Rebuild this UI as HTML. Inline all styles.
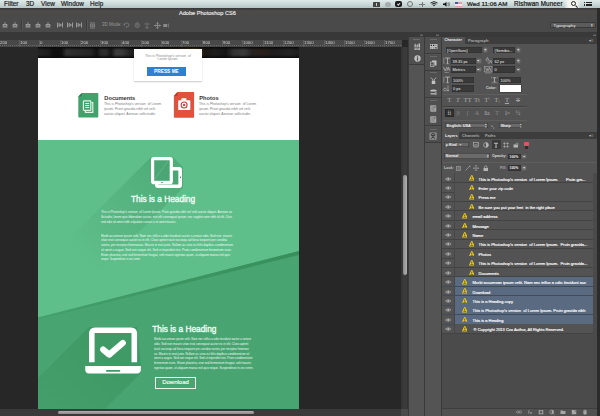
<!DOCTYPE html>
<html><head><meta charset="utf-8">
<style>
*{margin:0;padding:0;box-sizing:border-box}
html,body{width:600px;height:416px;overflow:hidden;background:#272727;font-family:"Liberation Sans",sans-serif}
.a{position:absolute}
#menubar{left:0;top:0;width:600px;height:8px;background:linear-gradient(#dfe9e9,#c8d6d6 60%,#b3c4c4);}
#menubar span{position:absolute;top:.3px;font-size:6.4px;line-height:8px;color:#1e1e1e;-webkit-text-stroke:.2px #1e1e1e;letter-spacing:.05px}
#titlebar{left:0;top:8px;width:600px;height:10px;background:linear-gradient(#383838,#3e3d3d 12%,#4d4a4a 25%,#4b4949)}
#optbar{left:0;top:18px;width:600px;height:13.5px;background:#4a4a4a}
#darkband{left:0;top:31.5px;width:408px;height:8.5px;background:#383838}
#ruler{left:0;top:40px;width:402px;height:7px;background:#484848;overflow:hidden}
#canvas{left:0;top:47px;width:402px;height:362px;background:#272727;overflow:hidden}
#vscroll{left:401px;top:46.5px;width:7px;height:362.5px;background:linear-gradient(90deg,#333,#3b3b3b 40%,#3a3a3a 85%,#2e2e2e)}
#hscroll{left:0;top:409px;width:401px;height:7px;background:#3a3a3a}
#hcorner{left:401px;top:409px;width:7px;height:7px;background:#4a4a4a}
#rpanel{left:408px;top:31.5px;width:192px;height:385px;background:#393939}
.ic{position:absolute;background:#bdbdbd}
.tl{position:absolute;color:#f2faf5;font-size:6.8px;line-height:9.5px;white-space:nowrap;transform-origin:0 0}
.hd{font-size:8.3px;color:#f4fbf6;line-height:10px;white-space:nowrap;-webkit-text-stroke:.35px #f4fbf6}
.tiny{position:absolute;color:#fff;font-size:3.4px;line-height:4.75px;word-spacing:-0.2px}
</style></head><body>
<div id="menubar" class="a">
<span style="left:4px">Filter</span>
<span style="left:26px">3D</span>
<span style="left:41px">View</span>
<span style="left:61px">Window</span>
<span style="left:90px">Help</span>
</div>
<div id="titlebar" class="a"><span class="a" style="left:179px;top:1.3px;font-size:5.6px;line-height:9px;color:#e8e8e8;-webkit-text-stroke:.15px #e8e8e8">Adobe Photoshop CS6</span></div>
<div id="optbar" class="a"></div>
<div id="darkband" class="a"></div>
<div id="ruler" class="a"></div>
<div id="canvas" class="a">
 <!-- document, coordinates relative to canvas (top=47) -->
 <div class="a" id="doc" style="left:38px;top:0;width:261px;height:362px;background:#fff;overflow:hidden">
  <div class="a" style="left:0;top:0;width:261px;height:11px;background:linear-gradient(90deg,#242424 0%,#1c1c1c 4%,#0e0e0e 6%,#101010 9%,#333 11%,#2c2c2c 14%,#262626 20%,#121212 22.5%,#2a2a2a 24%,#2e2e2e 26%,#161616 28%,#3c3c3c 30%,#3a3a3a 32%,#242424 35%,#1a1a1a 38%,#3a2c18 55%,#5a4222 60%,#1a1714 64%,#1e1e1e 68%,#151515 72%,#343434 75%,#3a3a3a 79%,#262222 82%,#2a1e1a 86%,#1e1c1c 90%,#242424 96%,#1c1c1c 100%)"></div>
  <div class="a" style="left:0;top:0;width:261px;height:11px;background:linear-gradient(#0a0a0a,rgba(0,0,0,0) 30%,rgba(0,0,0,0) 70%,#0a0a0a)"></div>
  <!-- popup card -->
  <div class="a" style="left:95.7px;top:2.2px;width:68.5px;height:31.5px;background:#fff;box-shadow:0 .6px 1.2px rgba(0,0,0,.22)">
   <div class="a" style="left:0;top:6px;width:68.5px;text-align:center;font-size:3.4px;line-height:3px;color:#8c8c8c">This is Photoshop's version &nbsp;of<br>Lorem Ipsum.</div>
   <div class="a" style="left:13px;top:18px;width:39.5px;height:8.8px;background:#2f80d1;color:#fff;font-weight:bold;font-size:4.8px;line-height:9px;text-align:center">PRESS ME</div>
  </div>
  <!-- features -->
  <svg class="a" style="left:40px;top:45px" width="22" height="27" viewBox="0 0 22 27">
   <path d="M3.8 0.9H19.6a0.7 0.7 0 0 1 .7.7V24.7a0.7 0.7 0 0 1-.7.7H1a0.7 0.7 0 0 1-.7-.7V4.4Z" fill="#41a26b"/>
   <path d="M3.8 0.9V4.4H0.3Z" fill="#2f7f52"/>
   <g fill="none" stroke="#e4f4ea" stroke-width="1.15">
    <rect x="5.4" y="8.9" width="7.4" height="9.4" rx=".8"/>
    <path d="M13.4 10.6H14.8V20.4H7.4V18.9"/>
    <path d="M7.2 11.5h4M7.2 13.5h4M7.2 15.5h4"/>
   </g>
  </svg>
  <div class="a" style="left:66.3px;top:47.5px;font-size:5.7px;font-weight:bold;color:#333;line-height:7px">Documents</div>
  <div class="a" style="left:66px;top:55.3px;width:58px;font-size:3.45px;line-height:4.7px;color:#7c7c7c">This is Photoshop's version &nbsp;of Lorem ipsum. Proin gravida nibh vel velit auctor aliquet. Aenean sollicitudin.</div>
  <svg class="a" style="left:135px;top:45px" width="22" height="27" viewBox="0 0 22 27">
   <path d="M4.6 0H20.4a0.7 0.7 0 0 1 .7.7V25.1a0.7 0.7 0 0 1-.7.7H1.6a0.7 0.7 0 0 1-.7-.7V3.7Z" fill="#e1513e"/>
   <path d="M4.6 0V3.7H0.9Z" fill="#b83a2a"/>
   <rect x="5.2" y="8.3" width="12.1" height="9.7" rx=".6" fill="#fff"/>
   <rect x="8.4" y="6.3" width="5" height="2.4" rx=".4" fill="#fff"/>
   <circle cx="11.1" cy="13" r="3.5" fill="#c9402f"/>
   <circle cx="11.1" cy="13" r="2.4" fill="#fff"/>
   <circle cx="11.1" cy="13" r="1.2" fill="#d64836"/>
  </svg>
  <div class="a" style="left:161.3px;top:47.5px;font-size:5.7px;font-weight:bold;color:#333;line-height:7px">Photos</div>
  <div class="a" style="left:161px;top:55.3px;width:58px;font-size:3.45px;line-height:4.7px;color:#7c7c7c">This is Photoshop's version &nbsp;of Lorem ipsum. Proin gravida nibh vel velit auctor aliquet. Aenean sollicitudin.</div>
  <!-- green sections -->
  <div class="a" style="left:0;top:93px;width:261px;height:269px;background:#5fbf8a"></div>
  <svg class="a" style="left:0;top:93px" width="261" height="269" viewBox="0 0 261 269">
   <defs>
    <linearGradient id="sh1" gradientUnits="userSpaceOnUse" x1="135" y1="30" x2="45" y2="120"><stop offset="0" stop-color="#3a9462" stop-opacity=".42"/><stop offset=".75" stop-color="#3a9462" stop-opacity=".12"/><stop offset="1" stop-color="#3a9462" stop-opacity="0"/></linearGradient>
    <linearGradient id="sh2" x1="1" y1="0" x2="0" y2="1"><stop offset="0" stop-color="#3a9462" stop-opacity=".45"/><stop offset="1" stop-color="#3a9462" stop-opacity=".15"/></linearGradient>
   </defs>
   <!-- tablet long shadow -->
   <polygon points="113,17 135,17 145,27 145,48 40,153 8,122" fill="url(#sh1)"/>
   <!-- lower dark region -->
   <polygon points="0,177.5 261,111 261,269 0,269" fill="#48a470"/>
   <linearGradient id="edg" gradientUnits="userSpaceOnUse" x1="0" y1="0" x2="261" y2="0"><stop offset="0" stop-color="#3d9864" stop-opacity=".35"/><stop offset=".5" stop-color="#3a945f" stop-opacity=".85"/><stop offset="1" stop-color="#37905c" stop-opacity="1"/></linearGradient><polygon points="0,177.5 261,111 261,115 0,179.5" fill="url(#edg)"/>
   <!-- laptop long shadow -->
   <linearGradient id="sh3" gradientUnits="userSpaceOnUse" x1="100" y1="200" x2="20" y2="280"><stop offset="0" stop-color="#3a9460" stop-opacity=".75"/><stop offset="1" stop-color="#3a9460" stop-opacity=".35"/></linearGradient><polygon points="51,187 99,187 103,226 103,233 67,269 0,269 0,238" fill="url(#sh3)"/>
  </svg>
  <!-- tablet icon -->
  <svg class="a" style="left:111px;top:108px" width="36" height="36" viewBox="0 0 36 36">
   <rect x="7.7" y="13.7" width="23.6" height="17.6" rx="1.2" fill="#4aa674" stroke="#fff" stroke-width="3.4"/>
   <rect x="29.6" y="14" width="2.2" height="17" fill="#fff"/>
   <rect x="31" y="21.6" width=".9" height="1.4" fill="#2f6e4c"/>
   <rect x="3.6" y="3.6" width="18.7" height="24" rx="1.2" fill="#4aa674" stroke="#fff" stroke-width="3.2"/>
   <rect x="3.8" y="25.8" width="18.3" height="2.4" fill="#fff"/>
   <rect x="12.3" y="27.1" width="1.4" height=".9" fill="#2f6e4c"/>
   <path d="M19 6 L6 24" stroke="#fff" stroke-opacity=".12" stroke-width="1.2"/>
  </svg>
  <div class="a hd" style="left:93px;top:147.3px">This is a Heading</div>
  <div class="tl" style="left:63.0px;top:162.00px;transform:scale(0.4437,.5)">This is Photoshop's version &nbsp;of Lorem Ipsum. Proin gravida nibh vel velit auctor aliquet. Aenean so</div>
  <div class="tl" style="left:63.0px;top:167.10px;transform:scale(0.4492,.5)">llicitudin, lorem quis bibendum auctor, nisi elit consequat ipsum, nec sagittis sem nibh id elit. Duis</div>
  <div class="tl" style="left:63.0px;top:172.20px;transform:scale(0.4334,.5)">sed odio sit amet nibh vulputate cursus a sit amet mauris.</div>
  <div class="tl" style="left:63.0px;top:185.60px;transform:scale(0.4423,.5)">Morbi accumsan ipsum velit. Nam nec tellus a odio tincidunt auctor a ornare odio. Sed non &nbsp;mauris</div>
  <div class="tl" style="left:63.0px;top:190.35px;transform:scale(0.4411,.5)">vitae erat consequat auctor eu in elit. Class aptent taciti sociosqu ad litora torquent per conubia</div>
  <div class="tl" style="left:63.0px;top:195.10px;transform:scale(0.4440,.5)">nostra, per inceptos himenaeos. Mauris in erat justo. Nullam ac urna eu felis dapibus condimentum</div>
  <div class="tl" style="left:63.0px;top:199.85px;transform:scale(0.4497,.5)">sit amet a augue. Sed non neque elit. Sed ut imperdiet nisi. Proin condimentum fermentum nunc.</div>
  <div class="tl" style="left:63.0px;top:204.60px;transform:scale(0.4361,.5)">Etiam pharetra, erat sed fermentum feugiat, velit mauris egestas quam, ut aliquam massa nisl quis</div>
  <div class="tl" style="left:63.0px;top:209.20px;transform:scale(0.3945,.5)">neque. Suspendisse in orci enim.</div>
  <!-- laptop icon -->
  <svg class="a" style="left:46px;top:279px" width="58" height="50" viewBox="0 0 58 50">
   <rect x="10.6" y="6.5" width="37" height="30" fill="#3f9a66"/>
   <path d="M7.8 36.2V7.2a3 3 0 0 1 3-3H47.3a3 3 0 0 1 3 3V36.2" fill="none" stroke="#fff" stroke-width="5.6"/>
   <path d="M1.25 39.9H56.9V43.4a4 4 0 0 1-4 4H5.25a4 4 0 0 1-4-4Z" fill="#fff"/>
   <rect x="21.9" y="44" width="14.4" height="1.7" rx=".85" fill="#3f9a66"/>
   <path d="M19.2 23.6 L25.2 28.6 L38.8 17" fill="none" stroke="#fff" stroke-width="6.2" stroke-linecap="round" stroke-linejoin="round"/>
  </svg>
  <div class="a hd" style="left:114.3px;top:276.6px">This is a Heading</div>
  <div class="tl" style="left:115.7px;top:289.10px;transform:scale(0.4251,.5)">Morbi accumsan ipsum velit. Nam nec tellus a odio tincidunt auctor a ornare</div>
  <div class="tl" style="left:115.7px;top:293.90px;transform:scale(0.4348,.5)">odio. Sed non mauris vitae erat consequat auctor eu in elit. Class aptent</div>
  <div class="tl" style="left:115.7px;top:298.70px;transform:scale(0.4260,.5)">taciti sociosqu ad litora torquent per conubia nostra, per inceptos himenae</div>
  <div class="tl" style="left:115.7px;top:303.50px;transform:scale(0.4364,.5)">os. Mauris in erat justo. Nullam ac urna eu felis dapibus condimentum sit</div>
  <div class="tl" style="left:115.7px;top:308.30px;transform:scale(0.4279,.5)">amet a augue. Sed non neque elit. Sed ut imperdiet nisi. Proin condimentum</div>
  <div class="tl" style="left:115.7px;top:313.00px;transform:scale(0.4397,.5)">fermentum nunc. Etiam pharetra, erat sed fermentum feugiat, velit mauris</div>
  <div class="tl" style="left:115.7px;top:317.70px;transform:scale(0.4351,.5)">egestas quam, ut aliquam massa nisl quis neque. Suspendisse in orci enim.</div>
  <div class="a" style="left:117px;top:330px;width:41px;height:11.5px;border:1px solid #e8f6ee;color:#f4fbf6;font-size:6px;line-height:9.5px;text-align:center;-webkit-text-stroke:.15px #f4fbf6">Download</div>
 </div>
</div>
<div id="vscroll" class="a"></div>
<div id="hscroll" class="a"></div><div id="hcorner" class="a"></div>
<div id="rpanel" class="a"></div>
<!--TOP-->
<div class="a" style="left:373px;top:2px;width:7px;height:4.5px;background:#444;border-radius:.5px"></div><div class="a" style="left:376px;top:2.6px;width:1px;height:3px;background:#ccc"></div>
<div class="a" style="left:385px;top:1.5px;width:5.5px;height:5.5px;background:#9a9a9a;border-radius:50%;opacity:.7"></div>
<div class="a" style="left:395px;top:1.2px;width:6.7px;height:5.8px;background:#1a1a1a;border-radius:2px"></div><div class="a" style="left:397px;top:3.3px;width:3px;height:1.5px;border-left:1px solid #ddd;border-bottom:1px solid #ddd;transform:rotate(-45deg)"></div>
<div class="a" style="left:406.5px;top:1.2px;width:6px;height:6px;border:.8px solid #777;border-radius:50%"></div>
<div class="a" style="left:419px;top:3.6px;width:6px;height:.8px;background:#777"></div><div class="a" style="left:421.6px;top:1.5px;width:.8px;height:5px;background:#777"></div>
<svg class="a" style="left:430px;top:1px" width="8" height="6" viewBox="0 0 16 12"><path d="M1 4Q8 -1.5 15 4M3.5 6.5Q8 3 12.5 6.5M6 9Q8 7.5 10 9" fill="none" stroke="#111" stroke-width="1.8"/></svg>
<svg class="a" style="left:442.5px;top:1px" width="7.5" height="6.5" viewBox="0 0 15 13"><path d="M0 5H3L7 1.5V11.5L3 8H0Z" fill="#111"/><path d="M9.5 3.5Q11.5 6.5 9.5 9.5M11.5 2Q14.5 6.5 11.5 11" fill="none" stroke="#333" stroke-width="1.1"/></svg>
<div class="a" style="left:455px;top:1.8px;width:7px;height:5px;background:repeating-linear-gradient(#d8a0a8 0 .7px,#f0e8e8 .7px 1.4px)"></div><div class="a" style="left:455px;top:1.8px;width:3px;height:2.5px;background:#4a5a9a"></div>
<div class="a" style="left:467px;top:0;font-size:6.2px;line-height:8.2px;color:#161616;-webkit-text-stroke:.2px #161616;letter-spacing:.03px">Wed 11:06 AM</div>
<div class="a" style="left:514px;top:0;font-size:6.3px;line-height:8.2px;color:#161616;letter-spacing:.1px;-webkit-text-stroke:.2px #161616">Rishwan Muneer</div>
<div class="a" style="left:564px;top:0;width:17px;height:7.5px;background:linear-gradient(90deg,rgba(255,255,255,0),#f4f4ee 25%,#f4f4ee 75%,rgba(255,255,255,0))"></div>
<div class="a" style="left:570.5px;top:1.3px;width:5.2px;height:5.2px;border:1.2px solid #222;border-radius:50%"></div><div class="a" style="left:574.8px;top:5.8px;width:2.8px;height:1.3px;background:#222;transform:rotate(45deg)"></div>
<div class="a" style="left:583.5px;top:1.8px;width:1px;height:1px;background:#222"></div><div class="a" style="left:585.5px;top:1.8px;width:6px;height:1px;background:#222"></div>
<div class="a" style="left:583.5px;top:3.6px;width:1px;height:1px;background:#222"></div><div class="a" style="left:585.5px;top:3.6px;width:6px;height:1px;background:#222"></div>
<div class="a" style="left:583.5px;top:5.4px;width:1px;height:1px;background:#222"></div><div class="a" style="left:585.5px;top:5.4px;width:6px;height:1px;background:#222"></div>
<svg class="a" style="left:2px;top:22px" width="6" height="6" viewBox="0 0 12 12"><path d="M6 0.5V4M2 5H10V8H2ZM1 10H11" fill="none" stroke="#c4c4c4" stroke-width="1.3"/></svg>
<svg class="a" style="left:12px;top:22px" width="6" height="6" viewBox="0 0 12 12"><path d="M6 0.5V4M2 5H10V8H2ZM1 10H11" fill="none" stroke="#c4c4c4" stroke-width="1.3"/></svg>
<svg class="a" style="left:25px;top:22px" width="6" height="6" viewBox="0 0 12 12"><path d="M6 0.5V4M2 5H10V8H2ZM1 10H11" fill="none" stroke="#c4c4c4" stroke-width="1.3"/></svg>
<svg class="a" style="left:35px;top:22px" width="6" height="6" viewBox="0 0 12 12"><path d="M6 0.5V4M2 5H10V8H2ZM1 10H11" fill="none" stroke="#c4c4c4" stroke-width="1.3"/></svg>
<svg class="a" style="left:45px;top:22px" width="6" height="6" viewBox="0 0 12 12"><path d="M6 0.5V4M2 5H10V8H2ZM1 10H11" fill="none" stroke="#c4c4c4" stroke-width="1.3"/></svg>
<svg class="a" style="left:57px;top:22px" width="6" height="6" viewBox="0 0 12 12"><path d="M1 1V11M4 3L9 6L4 9ZM11 1V11" fill="none" stroke="#c4c4c4" stroke-width="1.3"/></svg>
<svg class="a" style="left:67px;top:22px" width="6" height="6" viewBox="0 0 12 12"><path d="M1 1V11M4 3L9 6L4 9ZM11 1V11" fill="none" stroke="#c4c4c4" stroke-width="1.3"/></svg>
<svg class="a" style="left:76px;top:22px" width="6" height="6" viewBox="0 0 12 12"><path d="M1 1V11M4 3L9 6L4 9ZM11 1V11" fill="none" stroke="#c4c4c4" stroke-width="1.3"/></svg>
<div class="a" style="left:21px;top:20px;width:.7px;height:10px;background:#3c3c3c"></div><div class="a" style="left:21.7px;top:20px;width:.5px;height:10px;background:#575757"></div>
<div class="a" style="left:86px;top:20px;width:.7px;height:10px;background:#3c3c3c"></div><div class="a" style="left:86.7px;top:20px;width:.5px;height:10px;background:#575757"></div>
<svg class="a" style="left:89px;top:21.5px" width="7" height="7" viewBox="0 0 14 14"><path d="M2 2H12M2 12H12M3 4V10M11 4V10M6 4V10M8 4V10" fill="none" stroke="#a8a8a8" stroke-width="1.2"/></svg>
<div class="a" style="left:102px;top:21px;font-size:4.5px;line-height:8px;color:#9a9a9a">3D Mode:</div>
<svg class="a" style="left:123px;top:22px" width="7" height="6" viewBox="0 0 14 12"><path d="M2 6A5 4 0 1 1 7 10M5 10H8M3 4L2 6L4 7" fill="none" stroke="#8a8a8a" stroke-width="1.3"/></svg>
<svg class="a" style="left:133.5px;top:21.5px" width="6.5" height="6.5" viewBox="0 0 13 13"><circle cx="6.5" cy="6.5" r="4.5" fill="none" stroke="#8a8a8a" stroke-width="1.2"/><circle cx="6.5" cy="6.5" r="2" fill="none" stroke="#8a8a8a" stroke-width="1"/><path d="M6.5 0V2M6.5 11V13" stroke="#8a8a8a"/></svg>
<svg class="a" style="left:144px;top:21.5px" width="6" height="7" viewBox="0 0 12 14"><path d="M6 1V13M3 10L6 13L9 10M1 4H4M8 4H11" fill="none" stroke="#8a8a8a" stroke-width="1.3"/></svg>
<svg class="a" style="left:153.5px;top:21.5px" width="7" height="7" viewBox="0 0 14 14"><path d="M7 1V13M1 7H13M5 3L7 1L9 3M5 11L7 13L9 11M3 5L1 7L3 9M11 5L13 7L11 9" fill="none" stroke="#a5a5a5" stroke-width="1.3"/></svg>
<svg class="a" style="left:163px;top:22.5px" width="6.5" height="5" viewBox="0 0 13 10"><rect x="0.5" y="2" width="8" height="6" fill="#8a8a8a"/><path d="M11 1V9" stroke="#8a8a8a" stroke-width="1.2"/></svg>
<div class="a" style="left:0;top:45.3px;width:402px;height:1.2px;background:repeating-linear-gradient(90deg,#686868 0 1px,transparent 1px 2px)"></div>
<div class="a" style="left:-1.3px;top:40px;width:.7px;height:6.5px;background:#5c5c5c"></div>
<div class="a" style="left:-0.3px;top:40.2px;font-size:4.3px;line-height:5px;color:#d0d0d0;will-change:transform">200</div>
<div class="a" style="left:19.0px;top:40px;width:.7px;height:6.5px;background:#5c5c5c"></div>
<div class="a" style="left:20.0px;top:40.2px;font-size:4.3px;line-height:5px;color:#d0d0d0;will-change:transform">100</div>
<div class="a" style="left:39.3px;top:40px;width:.7px;height:6.5px;background:#5c5c5c"></div>
<div class="a" style="left:40.3px;top:40.2px;font-size:4.3px;line-height:5px;color:#d0d0d0;will-change:transform">0</div>
<div class="a" style="left:59.6px;top:40px;width:.7px;height:6.5px;background:#5c5c5c"></div>
<div class="a" style="left:60.6px;top:40.2px;font-size:4.3px;line-height:5px;color:#d0d0d0;will-change:transform">100</div>
<div class="a" style="left:79.9px;top:40px;width:.7px;height:6.5px;background:#5c5c5c"></div>
<div class="a" style="left:80.9px;top:40.2px;font-size:4.3px;line-height:5px;color:#d0d0d0;will-change:transform">200</div>
<div class="a" style="left:100.2px;top:40px;width:.7px;height:6.5px;background:#5c5c5c"></div>
<div class="a" style="left:101.2px;top:40.2px;font-size:4.3px;line-height:5px;color:#d0d0d0;will-change:transform">300</div>
<div class="a" style="left:120.5px;top:40px;width:.7px;height:6.5px;background:#5c5c5c"></div>
<div class="a" style="left:121.5px;top:40.2px;font-size:4.3px;line-height:5px;color:#d0d0d0;will-change:transform">400</div>
<div class="a" style="left:140.8px;top:40px;width:.7px;height:6.5px;background:#5c5c5c"></div>
<div class="a" style="left:141.8px;top:40.2px;font-size:4.3px;line-height:5px;color:#d0d0d0;will-change:transform">500</div>
<div class="a" style="left:161.1px;top:40px;width:.7px;height:6.5px;background:#5c5c5c"></div>
<div class="a" style="left:162.1px;top:40.2px;font-size:4.3px;line-height:5px;color:#d0d0d0;will-change:transform">600</div>
<div class="a" style="left:181.4px;top:40px;width:.7px;height:6.5px;background:#5c5c5c"></div>
<div class="a" style="left:182.4px;top:40.2px;font-size:4.3px;line-height:5px;color:#d0d0d0;will-change:transform">700</div>
<div class="a" style="left:201.7px;top:40px;width:.7px;height:6.5px;background:#5c5c5c"></div>
<div class="a" style="left:202.7px;top:40.2px;font-size:4.3px;line-height:5px;color:#d0d0d0;will-change:transform">800</div>
<div class="a" style="left:222.0px;top:40px;width:.7px;height:6.5px;background:#5c5c5c"></div>
<div class="a" style="left:223.0px;top:40.2px;font-size:4.3px;line-height:5px;color:#d0d0d0;will-change:transform">900</div>
<div class="a" style="left:242.3px;top:40px;width:.7px;height:6.5px;background:#5c5c5c"></div>
<div class="a" style="left:243.3px;top:40.2px;font-size:4.3px;line-height:5px;color:#d0d0d0;will-change:transform">1000</div>
<div class="a" style="left:262.6px;top:40px;width:.7px;height:6.5px;background:#5c5c5c"></div>
<div class="a" style="left:263.6px;top:40.2px;font-size:4.3px;line-height:5px;color:#d0d0d0;will-change:transform">1100</div>
<div class="a" style="left:282.9px;top:40px;width:.7px;height:6.5px;background:#5c5c5c"></div>
<div class="a" style="left:283.9px;top:40.2px;font-size:4.3px;line-height:5px;color:#d0d0d0;will-change:transform">1200</div>
<div class="a" style="left:303.2px;top:40px;width:.7px;height:6.5px;background:#5c5c5c"></div>
<div class="a" style="left:304.2px;top:40.2px;font-size:4.3px;line-height:5px;color:#d0d0d0;will-change:transform">1300</div>
<div class="a" style="left:323.5px;top:40px;width:.7px;height:6.5px;background:#5c5c5c"></div>
<div class="a" style="left:324.5px;top:40.2px;font-size:4.3px;line-height:5px;color:#d0d0d0;will-change:transform">1400</div>
<div class="a" style="left:343.8px;top:40px;width:.7px;height:6.5px;background:#5c5c5c"></div>
<div class="a" style="left:344.8px;top:40.2px;font-size:4.3px;line-height:5px;color:#d0d0d0;will-change:transform">1500</div>
<div class="a" style="left:364.1px;top:40px;width:.7px;height:6.5px;background:#5c5c5c"></div>
<div class="a" style="left:365.1px;top:40.2px;font-size:4.3px;line-height:5px;color:#d0d0d0;will-change:transform">1600</div>
<div class="a" style="left:384.4px;top:40px;width:.7px;height:6.5px;background:#5c5c5c"></div>
<div class="a" style="left:385.4px;top:40.2px;font-size:4.3px;line-height:5px;color:#d0d0d0;will-change:transform">1700</div>
<div class="a" style="left:403px;top:175px;width:3.5px;height:100px;background:linear-gradient(90deg,#8a8a8a,#b0b0b0);border-radius:2px"></div>
<div class="a" style="left:58px;top:410.5px;width:196px;height:3.5px;background:linear-gradient(#b0b0b0,#8a8a8a);border-radius:2px"></div>
<!--/TOP-->
<!--RIGHT-->
<div class="a" style="left:409px;top:37px;width:15px;height:379px;background:#545454"></div>
<div class="a" style="left:409px;top:37px;width:15px;height:28.2px;background:#4f4f4f;border-bottom:1px solid #3b3b3b"></div>
<div class="a" style="left:425px;top:37px;width:15.5px;height:379px;background:#545454"></div>
<div class="a" style="left:425px;top:37px;width:15.5px;height:16.700000000000003px;background:#4f4f4f;border-bottom:1px solid #3b3b3b"></div>
<div class="a" style="left:425px;top:54.5px;width:15.5px;height:16.0px;background:#4f4f4f;border-bottom:1px solid #3b3b3b"></div>
<div class="a" style="left:425px;top:71px;width:15.5px;height:27px;background:#4f4f4f;border-bottom:1px solid #3b3b3b"></div>
<div class="a" style="left:425px;top:98.5px;width:15.5px;height:27.700000000000003px;background:#4f4f4f;border-bottom:1px solid #3b3b3b"></div>
<div class="a" style="left:425px;top:126.8px;width:15.5px;height:16.200000000000003px;background:#4f4f4f;border-bottom:1px solid #3b3b3b"></div>
<div class="a" style="left:413px;top:38.6px;width:7px;height:.8px;background:#6a6a6a"></div>
<div class="a" style="left:430px;top:38.6px;width:7px;height:.8px;background:#6a6a6a"></div>
<div class="a" style="left:430px;top:56px;width:7px;height:.8px;background:#6a6a6a"></div>
<div class="a" style="left:430px;top:72.4px;width:7px;height:.8px;background:#6a6a6a"></div>
<div class="a" style="left:430px;top:100px;width:7px;height:.8px;background:#6a6a6a"></div>
<div class="a" style="left:430px;top:128.6px;width:7px;height:.8px;background:#6a6a6a"></div>
<svg class="a" style="left:414px;top:43px" width="6.5" height="7.5" viewBox="0 0 13 15"><path d="M1 9V3L3.5 1V9ZM5 9V4L7.5 2V9ZM9 9V1H12V9Z" fill="#c2c2c2"/><rect x="1" y="10.5" width="11" height="3.5" fill="#c2c2c2"/><rect x="3" y="11.5" width="7" height="1.2" fill="#555"/></svg>
<svg class="a" style="left:413.8px;top:54.8px" width="7" height="7" viewBox="0 0 14 14"><circle cx="7" cy="7" r="6.3" fill="#c2c2c2"/><circle cx="7" cy="4" r="1.3" fill="#444"/><rect x="5.8" y="6.2" width="2.4" height="5" fill="#444"/></svg>
<svg class="a" style="left:430px;top:43.8px" width="7.5" height="5.5" viewBox="0 0 15 11"><rect x="0" y="0" width="15" height="11" fill="#bdbdbd"/><rect x="1.5" y="1.5" width="2.5" height="2.5" fill="#222"/><rect x="6" y="1.5" width="2.5" height="2.5" fill="#222"/><rect x="10.5" y="1.5" width="2.5" height="2.5" fill="#888"/><rect x="1.5" y="6.5" width="2.5" height="2.5" fill="#888"/><rect x="6" y="6.5" width="2.5" height="2.5" fill="#888"/><rect x="10.5" y="6.5" width="2.5" height="2.5" fill="#222"/></svg>
<svg class="a" style="left:430px;top:59.8px" width="7" height="7" viewBox="0 0 14 14"><path d="M4 1H13V11H9V4H4Z" fill="#c2c2c2"/><path d="M1 4H8V13H1Z" fill="none" stroke="#c2c2c2" stroke-width="1.4"/><path d="M3 8L6 11" stroke="#c2c2c2" stroke-width="1.4"/></svg>
<svg class="a" style="left:429.6px;top:76.5px" width="7" height="7.5" viewBox="0 0 14 15"><path d="M2 1L6 6M12 1L8 6" stroke="#c2c2c2" stroke-width="1.6"/><rect x="3.5" y="7" width="7" height="7.5" rx="1" fill="#c2c2c2"/></svg>
<svg class="a" style="left:430px;top:88.5px" width="7" height="6.5" viewBox="0 0 14 13"><path d="M1 2Q7 0 13 2V5H1Z" fill="#c2c2c2"/><path d="M1 8H9L13 6V12L9 11H1Z" fill="#c2c2c2" opacity=".8"/></svg>
<svg class="a" style="left:430px;top:105px" width="6.5" height="7" viewBox="0 0 13 14"><rect x="0.5" y="0.5" width="12" height="13" rx="1.5" fill="#a9a9a9"/><rect x="2.5" y="2.5" width="7" height="9" fill="#8e8e8e"/><path d="M10 2V6" stroke="#333" stroke-width="1"/></svg>
<svg class="a" style="left:430px;top:116px" width="6.5" height="7" viewBox="0 0 13 14"><rect x="0.5" y="0.5" width="12" height="13" rx="1.5" fill="#a9a9a9"/><rect x="2.5" y="2.5" width="7" height="9" fill="#8e8e8e"/><path d="M10 2V6" stroke="#333" stroke-width="1"/></svg>
<svg class="a" style="left:428.9px;top:131.5px" width="8.2" height="8.2" viewBox="0 0 16 16"><rect x="0.5" y="0.5" width="15" height="15" rx="3" fill="#8a8a8a" stroke="#6a6a6a" stroke-width=".8"/><path d="M5 4Q8 2 11 4V7H5ZM8 7V10M4 13L8 10L12 13" fill="none" stroke="#222" stroke-width="1.5"/></svg>
<svg class="a" style="left:419.5px;top:33.6px" width="3.6" height="2.4" viewBox="0 0 10 7"><path d="M3.5 0.5L0.5 3.5L3.5 6.5ZM9.5 0.5L6.5 3.5L9.5 6.5Z" fill="#c0c0c0"/></svg>
<svg class="a" style="left:435.5px;top:33.6px" width="3.6" height="2.4" viewBox="0 0 10 7"><path d="M3.5 0.5L0.5 3.5L3.5 6.5ZM9.5 0.5L6.5 3.5L9.5 6.5Z" fill="#c0c0c0"/></svg>
<svg class="a" style="left:592.5px;top:33.6px" width="3.6" height="2.4" viewBox="0 0 10 7"><path d="M3.5 0.5L0.5 3.5L3.5 6.5ZM9.5 0.5L6.5 3.5L9.5 6.5Z" fill="#c0c0c0"/></svg>
<div class="a" style="left:442px;top:36.5px;width:155px;height:7px;background:#3d3d3d"></div>
<div class="a" style="left:442px;top:43.5px;width:155px;height:88px;background:#535353"></div>
<div class="a" style="left:442px;top:36.5px;width:23px;height:7px;background:#535353"></div>
<div class="a" style="left:444.5px;top:36.5px;font-size:3.75px;line-height:7.5px;font-weight:bold;color:#ececec">Character</div>
<div class="a" style="left:468px;top:36.5px;font-size:4.15px;line-height:7.5px;font-weight:bold;color:#a8a8a8">Paragraph</div>
<div class="a" style="left:589px;top:38.5px;font-size:4px;line-height:4px;color:#bbb">&#9662;&#8801;</div>
<div class="a" style="left:445.5px;top:46.5px;width:36.5px;height:6.2px;background:#393939;box-shadow:inset 0 0 0 .5px #2e2e2e;font-size:3.9px;line-height:6.2px;color:#f0f0f0;padding-left:1.6px;padding-top:1px;white-space:nowrap;overflow:hidden;">[OpenSans]</div>
<div class="a" style="left:482.5px;top:47px;width:5.5px;height:5.5px;background:#6e6e6e;box-shadow:inset 0 0 0 .5px #4a4a4a"><svg class="a" style="left:1.45px;top:1.95px" width="2.6" height="1.8" viewBox="0 0 4 3"><path d="M0 0H4L2 3Z" fill="#d5d5d5"/></svg></div>
<div class="a" style="left:493px;top:46.5px;width:22px;height:6.2px;background:#393939;box-shadow:inset 0 0 0 .5px #2e2e2e;font-size:3.9px;line-height:6.2px;color:#f0f0f0;padding-left:1.6px;padding-top:1px;white-space:nowrap;overflow:hidden;">(Semibo...</div>
<div class="a" style="left:515.5px;top:47px;width:5.5px;height:5.5px;background:#6e6e6e;box-shadow:inset 0 0 0 .5px #4a4a4a"><svg class="a" style="left:1.45px;top:1.95px" width="2.6" height="1.8" viewBox="0 0 4 3"><path d="M0 0H4L2 3Z" fill="#d5d5d5"/></svg></div>
<svg class="a" style="left:443px;top:57px" width="7.5" height="7.5" viewBox="0 0 14 14"><path d="M4 2H13M8.5 2V12.5M6.5 12.5H10.5" fill="none" stroke="#b0b0b0" stroke-width="1.8"/><path d="M1.5 1V13" stroke="#b0b0b0" stroke-width="1"/></svg>
<div class="a" style="left:451px;top:57.5px;width:25px;height:6.5px;background:#393939;box-shadow:inset 0 0 0 .5px #2e2e2e;font-size:3.9px;line-height:6.5px;color:#f0f0f0;padding-left:1.6px;padding-top:1px;white-space:nowrap;overflow:hidden;">39.35 px</div>
<div class="a" style="left:476px;top:58px;width:5.5px;height:5.5px;background:#6e6e6e;box-shadow:inset 0 0 0 .5px #4a4a4a"><svg class="a" style="left:1.45px;top:1.95px" width="2.6" height="1.8" viewBox="0 0 4 3"><path d="M0 0H4L2 3Z" fill="#d5d5d5"/></svg></div>
<svg class="a" style="left:484.5px;top:57px" width="7.5" height="7.5" viewBox="0 0 14 14"><path d="M2 6L4.5 1L7 6M8 12L10.5 7L13 12" fill="none" stroke="#b0b0b0" stroke-width="1.4"/><path d="M1 7H13M6 13V9" stroke="#b0b0b0" stroke-width=".9"/></svg>
<div class="a" style="left:493px;top:57.5px;width:22px;height:6.5px;background:#393939;box-shadow:inset 0 0 0 .5px #2e2e2e;font-size:3.9px;line-height:6.5px;color:#f0f0f0;padding-left:1.6px;padding-top:1px;white-space:nowrap;overflow:hidden;">62 px</div>
<div class="a" style="left:515.5px;top:58px;width:5.5px;height:5.5px;background:#6e6e6e;box-shadow:inset 0 0 0 .5px #4a4a4a"><svg class="a" style="left:1.45px;top:1.95px" width="2.6" height="1.8" viewBox="0 0 4 3"><path d="M0 0H4L2 3Z" fill="#d5d5d5"/></svg></div>
<svg class="a" style="left:443px;top:66px" width="7.5" height="7.5" viewBox="0 0 14 14"><path d="M1 2L4 9L7 2M7 9L10 2L13 9M8.5 6H11.5" fill="none" stroke="#b0b0b0" stroke-width="1.5"/><path d="M3 12H11" stroke="#b0b0b0" stroke-width="1"/></svg>
<div class="a" style="left:451px;top:66.3px;width:25px;height:6.3px;background:#393939;box-shadow:inset 0 0 0 .5px #2e2e2e;font-size:3.9px;line-height:6.3px;color:#f0f0f0;padding-left:1.6px;padding-top:1px;white-space:nowrap;overflow:hidden;">Metrics</div>
<div class="a" style="left:476px;top:66.7px;width:5.5px;height:5.5px;background:#6e6e6e;box-shadow:inset 0 0 0 .5px #4a4a4a"><svg class="a" style="left:1.45px;top:1.95px" width="2.6" height="1.8" viewBox="0 0 4 3"><path d="M0 0H4L2 3Z" fill="#d5d5d5"/></svg></div>
<svg class="a" style="left:484px;top:66px" width="8.5" height="7.5" viewBox="0 0 16 14"><rect x="1" y="1" width="14" height="10" fill="none" stroke="#b0b0b0" stroke-width="1"/><path d="M3 3L5.5 9L8 3M8 9L10.5 3L13 9" fill="none" stroke="#b0b0b0" stroke-width="1.4"/><path d="M2 13H14" stroke="#b0b0b0" stroke-width="1"/></svg>
<div class="a" style="left:493px;top:66.3px;width:22px;height:6.3px;background:#393939;box-shadow:inset 0 0 0 .5px #2e2e2e;font-size:3.9px;line-height:6.3px;color:#f0f0f0;padding-left:1.6px;padding-top:1px;white-space:nowrap;overflow:hidden;">0</div>
<div class="a" style="left:515.5px;top:66.7px;width:5.5px;height:5.5px;background:#6e6e6e;box-shadow:inset 0 0 0 .5px #4a4a4a"><svg class="a" style="left:1.45px;top:1.95px" width="2.6" height="1.8" viewBox="0 0 4 3"><path d="M0 0H4L2 3Z" fill="#d5d5d5"/></svg></div>
<svg class="a" style="left:443px;top:76px" width="7.5" height="7.5" viewBox="0 0 14 14"><path d="M4 2H13M8.5 2V12.5M6.5 12.5H10.5" fill="none" stroke="#b0b0b0" stroke-width="1.8"/><path d="M1.5 1V13" stroke="#b0b0b0" stroke-width="1"/></svg>
<div class="a" style="left:451.5px;top:76.5px;width:22px;height:6.5px;background:#393939;box-shadow:inset 0 0 0 .5px #2e2e2e;font-size:3.9px;line-height:6.5px;color:#f0f0f0;padding-left:1.6px;padding-top:1px;white-space:nowrap;overflow:hidden;">100%</div>
<svg class="a" style="left:490.5px;top:76px" width="7" height="7.5" viewBox="0 0 14 14"><path d="M3.5 3H10.5M7 3V11M5 11H9" fill="none" stroke="#b0b0b0" stroke-width="1.8"/><path d="M1 13H13M1 1V4M13 1V4" stroke="#b0b0b0" stroke-width=".9"/></svg>
<div class="a" style="left:499px;top:76.5px;width:22px;height:6.5px;background:#393939;box-shadow:inset 0 0 0 .5px #2e2e2e;font-size:3.9px;line-height:6.5px;color:#f0f0f0;padding-left:1.6px;padding-top:1px;white-space:nowrap;overflow:hidden;">100%</div>
<svg class="a" style="left:443px;top:85px" width="7" height="7" viewBox="0 0 14 14"><circle cx="4" cy="9" r="2.8" fill="none" stroke="#b0b0b0" stroke-width="1.4"/><path d="M10 1V12M8 10L10 12.5L12 10" fill="none" stroke="#b0b0b0" stroke-width="1.4"/></svg>
<div class="a" style="left:451.5px;top:85px;width:22px;height:6.5px;background:#393939;box-shadow:inset 0 0 0 .5px #2e2e2e;font-size:3.9px;line-height:6.5px;color:#f0f0f0;padding-left:1.6px;padding-top:1px;white-space:nowrap;overflow:hidden;">0 px</div>
<div class="a" style="left:486px;top:85px;font-size:3.6px;line-height:6.5px;font-weight:bold;color:#ddd">Color:</div>
<div class="a" style="left:500px;top:85px;width:21px;height:6.5px;background:#fff;box-shadow:0 0 0 .5px #333"></div>
<div class="a" style="left:443px;top:93.5px;width:84px;height:.8px;background:#404040"></div>
<div class="a" style="left:443px;top:94.2px;width:84px;height:.5px;background:#5e5e5e"></div>
<div class="a" style="left:443px;top:106px;width:84px;height:.8px;background:#404040"></div>
<div class="a" style="left:443px;top:106.7px;width:84px;height:.5px;background:#5e5e5e"></div>
<div class="a" style="left:443px;top:119.5px;width:84px;height:.8px;background:#404040"></div>
<div class="a" style="left:443px;top:120.2px;width:84px;height:.5px;background:#5e5e5e"></div>
<div class="a" style="left:444.8px;top:97.3px;width:9px;text-align:center;font-family:'Liberation Serif',serif;font-size:6.8px;line-height:6.5px;color:#a9a9a9;">T</div>
<div class="a" style="left:453.5px;top:97.3px;width:9px;text-align:center;font-family:'Liberation Serif',serif;font-size:6.8px;line-height:6.5px;color:#a9a9a9;font-style:italic;">T</div>
<div class="a" style="left:463.1px;top:97.3px;width:9px;text-align:center;font-family:'Liberation Serif',serif;font-size:6.8px;line-height:6.5px;color:#a9a9a9;">TT</div>
<div class="a" style="left:472.5px;top:97.3px;width:9px;text-align:center;font-family:'Liberation Serif',serif;font-size:6.8px;line-height:6.5px;color:#a9a9a9;">Tt</div>
<div class="a" style="left:482.5px;top:97.3px;width:9px;text-align:center;font-family:'Liberation Serif',serif;font-size:6.8px;line-height:6.5px;color:#a9a9a9;">T<span style="font-size:3px;position:relative;top:-2px">1</span></div>
<div class="a" style="left:492.5px;top:97.3px;width:9px;text-align:center;font-family:'Liberation Serif',serif;font-size:6.8px;line-height:6.5px;color:#a9a9a9;">T<span style="font-size:3px;position:relative;top:1px">1</span></div>
<div class="a" style="left:502.5px;top:97.3px;width:9px;text-align:center;font-family:'Liberation Serif',serif;font-size:6.8px;line-height:6.5px;color:#a9a9a9;text-decoration:underline;">T</div>
<div class="a" style="left:513.5px;top:97.3px;width:9px;text-align:center;font-family:'Liberation Serif',serif;font-size:6.8px;line-height:6.5px;color:#a9a9a9;text-decoration:line-through;">T</div>
<div class="a" style="left:445px;top:109.2px;width:8.8px;height:8.3px;background:#2f2f2f;box-shadow:inset 0 0 0 .5px #262626"></div>
<div class="a" style="left:444.8px;top:110px;width:9px;text-align:center;font-family:'Liberation Serif',serif;font-size:6px;line-height:6.5px;color:#c8c8c8">fi</div>
<div class="a" style="left:453.5px;top:110px;width:9px;text-align:center;font-family:'Liberation Serif',serif;font-size:6px;line-height:6.5px;color:#8a8a8a">&#643;t</div>
<div class="a" style="left:463.1px;top:110px;width:9px;text-align:center;font-family:'Liberation Serif',serif;font-size:6px;line-height:6.5px;color:#8a8a8a">&#643;</div>
<div class="a" style="left:472.5px;top:110px;width:9px;text-align:center;font-family:'Liberation Serif',serif;font-size:6px;line-height:6.5px;color:#8a8a8a">A</div>
<div class="a" style="left:482.5px;top:110px;width:9px;text-align:center;font-family:'Liberation Serif',serif;font-size:6px;line-height:6.5px;color:#b0b0b0">&#257;a</div>
<div class="a" style="left:492.5px;top:110px;width:9px;text-align:center;font-family:'Liberation Serif',serif;font-size:6px;line-height:6.5px;color:#8a8a8a">T</div>
<div class="a" style="left:502.5px;top:110px;width:9px;text-align:center;font-family:'Liberation Serif',serif;font-size:6px;line-height:6.5px;color:#b0b0b0">1<span style="font-size:3px;position:relative;top:-1.5px">st</span></div>
<div class="a" style="left:513.5px;top:110px;width:9px;text-align:center;font-family:'Liberation Serif',serif;font-size:6px;line-height:6.5px;color:#b0b0b0">&#189;</div>
<div class="a" style="left:445.2px;top:122.7px;width:42.5px;height:5.6px;background:#6a6a6a;box-shadow:inset 0 0 0 .5px #2e2e2e;font-size:3.8px;line-height:5.6px;color:#eee;padding-left:1.6px;padding-top:1px;white-space:nowrap;overflow:hidden;font-weight:bold;">English: USA</div>
<div class="a" style="left:485px;top:123.3px;font-size:3px;line-height:2.2px;color:#ddd">&#9652;<br>&#9662;</div>
<div class="a" style="left:491px;top:122px;font-family:'Liberation Serif',serif;font-size:4.5px;line-height:7px;color:#aaa">a<sub style="font-size:3px">a</sub></div>
<div class="a" style="left:499.2px;top:122.7px;width:23px;height:5.6px;background:#6a6a6a;box-shadow:inset 0 0 0 .5px #2e2e2e;font-size:3.5px;line-height:5.6px;color:#eee;padding-left:1.6px;padding-top:1px;white-space:nowrap;overflow:hidden;font-weight:bold;">Sharp</div>
<div class="a" style="left:519.5px;top:123.3px;font-size:3px;line-height:2.2px;color:#ddd">&#9652;<br>&#9662;</div>
<div class="a" style="left:442px;top:131.5px;width:155px;height:7.5px;background:#3d3d3d"></div>
<div class="a" style="left:442px;top:139px;width:155px;height:277px;background:#535353"></div>
<div class="a" style="left:442px;top:131.5px;width:17.2px;height:7.5px;background:#535353"></div>
<div class="a" style="left:445px;top:131.5px;font-size:3.9px;line-height:7.8px;font-weight:bold;color:#ececec">Layers</div>
<div class="a" style="left:462px;top:131.5px;font-size:3.9px;line-height:7.8px;font-weight:bold;color:#a8a8a8">Channels</div>
<div class="a" style="left:485px;top:131.5px;font-size:3.9px;line-height:7.8px;font-weight:bold;color:#a8a8a8">Paths</div>
<div class="a" style="left:589px;top:133.5px;font-size:4px;line-height:4px;color:#bbb">&#9662;&#8801;</div>
<div class="a" style="left:444.2px;top:141.8px;width:24.6px;height:5.4px;background:#6a6a6a;box-shadow:inset 0 0 0 .5px #2e2e2e;font-size:3.5px;line-height:5.4px;color:#eee;padding-left:1.6px;padding-top:1px;white-space:nowrap;overflow:hidden;font-weight:bold;">&#961; Kind &nbsp;&nbsp;&#247;</div>
<div class="a" style="left:492px;top:140px;width:9px;height:9px;background:#3a3a3a"></div>
<svg class="a" style="left:473px;top:142px" width="6" height="5.5" viewBox="0 0 12 11"><rect x="1" y="1" width="10" height="7" fill="none" stroke="#b5b5b5" stroke-width="1.3"/><path d="M3 6L5 4L7 6L9 3" fill="none" stroke="#b5b5b5" stroke-width="1"/><path d="M1 10H11" stroke="#b5b5b5" stroke-width="1.2"/></svg>
<svg class="a" style="left:483px;top:141.8px" width="6" height="6" viewBox="0 0 12 12"><circle cx="6" cy="6" r="4.8" fill="none" stroke="#b5b5b5" stroke-width="1.4"/><path d="M6 1.2A4.8 4.8 0 0 1 6 10.8Z" fill="#b5b5b5"/></svg>
<svg class="a" style="left:493px;top:141.8px" width="6" height="6" viewBox="0 0 12 12"><path d="M2 2.5H10M6 2.5V10.5M4.5 10.5H7.5" fill="none" stroke="#cfcfcf" stroke-width="1.7"/></svg>
<svg class="a" style="left:502.5px;top:142px" width="6" height="6" viewBox="0 0 12 12"><path d="M3 0V12M9 0V12M0 3H12M0 9H12" fill="none" stroke="#b5b5b5" stroke-width="1"/></svg>
<svg class="a" style="left:513px;top:142px" width="6" height="6" viewBox="0 0 12 12"><rect x="1" y="5" width="9" height="6" fill="#b5b5b5"/><path d="M5 5A3 3 0 0 1 11 5" fill="none" stroke="#7fb0a0" stroke-width="1.3"/></svg>
<div class="a" style="left:524px;top:141.5px;width:4.5px;height:4px;background:#e0546a;border-radius:1px"></div>
<div class="a" style="left:524.5px;top:145.5px;width:3.5px;height:3px;background:#2e2e2e"></div>
<div class="a" style="left:444.2px;top:153.2px;width:45.7px;height:5.8px;background:#6a6a6a;box-shadow:inset 0 0 0 .5px #2e2e2e;font-size:3.6px;line-height:5.8px;color:#eee;padding-left:1.6px;padding-top:1px;white-space:nowrap;overflow:hidden;font-weight:bold;">Normal</div>
<div class="a" style="left:487px;top:153.8px;font-size:3px;line-height:2.2px;color:#ddd">&#9652;<br>&#9662;</div>
<div class="a" style="left:492px;top:153.2px;font-size:3.6px;line-height:6px;font-weight:bold;color:#ddd">Opacity:</div>
<div class="a" style="left:508px;top:153.6px;width:12.5px;height:5.7px;background:#393939;box-shadow:inset 0 0 0 .5px #2e2e2e;font-size:3.4px;line-height:5.7px;color:#f0f0f0;padding-left:1.6px;padding-top:1px;white-space:nowrap;overflow:hidden;font-weight:bold;">100%</div>
<div class="a" style="left:521px;top:153.6px;width:6px;height:5.7px;background:#6e6e6e;box-shadow:inset 0 0 0 .5px #4a4a4a"><svg class="a" style="left:1.70px;top:2.05px" width="2.6" height="1.8" viewBox="0 0 4 3"><path d="M0 0H4L2 3Z" fill="#d5d5d5"/></svg></div>
<div class="a" style="left:443px;top:161.5px;width:154px;height:.7px;background:#434343"></div>
<div class="a" style="left:443px;top:162.2px;width:154px;height:.5px;background:#5e5e5e"></div>
<div class="a" style="left:444px;top:165px;font-size:3.6px;line-height:6px;font-weight:bold;color:#ccc">Lock:</div>
<div class="a" style="left:456px;top:165.5px;width:5px;height:5px;background:#6e6e6e;border:.5px solid #888"></div>
<svg class="a" style="left:465px;top:165px" width="6" height="6" viewBox="0 0 12 12"><path d="M1 11L9 3" stroke="#b5b5b5" stroke-width="1.2"/><path d="M8 2L10 1L11 3L9.5 4Z" fill="#b5b5b5"/></svg>
<svg class="a" style="left:473px;top:164.8px" width="6" height="6.5" viewBox="0 0 12 13"><path d="M6 0.5V12.5M0.5 6.5H11.5M4 2.5L6 0.5L8 2.5M4 10.5L6 12.5L8 10.5M2.5 4.5L0.5 6.5L2.5 8.5M9.5 4.5L11.5 6.5L9.5 8.5" fill="none" stroke="#b5b5b5" stroke-width="1"/></svg>
<svg class="a" style="left:482.5px;top:164.8px" width="5.5" height="6.5" viewBox="0 0 11 13"><path d="M3 6V4A2.5 2.5 0 0 1 8 4V6" fill="none" stroke="#b5b5b5" stroke-width="1.3"/><rect x="1" y="6" width="9" height="6.5" fill="#b5b5b5"/></svg>
<div class="a" style="left:500px;top:165px;font-size:3.6px;line-height:6px;font-weight:bold;color:#aaa">Fill:</div>
<div class="a" style="left:508px;top:165.3px;width:12.5px;height:5.5px;background:#393939;box-shadow:inset 0 0 0 .5px #2e2e2e;font-size:3.4px;line-height:5.5px;color:#f0f0f0;padding-left:1.6px;padding-top:1px;white-space:nowrap;overflow:hidden;font-weight:bold;">100%</div>
<div class="a" style="left:521px;top:165.3px;width:6px;height:5.5px;background:#6e6e6e;box-shadow:inset 0 0 0 .5px #4a4a4a"><svg class="a" style="left:1.70px;top:1.95px" width="2.6" height="1.8" viewBox="0 0 4 3"><path d="M0 0H4L2 3Z" fill="#d5d5d5"/></svg></div>
<div class="a" style="left:442px;top:173px;width:150.5px;height:161px;background:#535353;overflow:hidden">
<div class="a" style="left:12.5px;top:0.60px;width:138px;height:9.42px;background:#535353"></div>
<div class="a" style="left:0;top:9.22px;width:151px;height:.8px;background:#434343"></div>
<svg class="a" style="left:3px;top:3.50px" width="6.5" height="4" viewBox="0 0 13 8"><path d="M0.8 4Q6.5 -2 12.2 4Q6.5 10 0.8 4Z" fill="none" stroke="#b8b8b8" stroke-width="1.2"/><circle cx="6.5" cy="4" r="1.9" fill="#b8b8b8"/></svg>
<svg class="a" style="left:26.6px;top:2.40px" width="5.6" height="5.6" viewBox="0 0 13 13"><path d="M5 0.5H8L12.6 11V12.5H0.4V11Z" fill="#f0cf2a"/><rect x="5.5" y="3.5" width="2" height="5" fill="#4a3f12"/><rect x="3" y="9.8" width="7" height="1.4" fill="#4a3f12"/></svg>
<div class="a" style="left:36.5px;top:1.50px;font-size:4px;line-height:9.42px;color:#fafafa;white-space:nowrap;-webkit-text-stroke:.16px #fafafa">This is Photoshop's version &nbsp;of Lorem Ipsum. &nbsp;&nbsp;&nbsp;&nbsp;&nbsp;&nbsp;Proin gra...</div>
<div class="a" style="left:12.5px;top:10.02px;width:138px;height:9.42px;background:#535353"></div>
<div class="a" style="left:0;top:18.64px;width:151px;height:.8px;background:#434343"></div>
<svg class="a" style="left:3px;top:12.92px" width="6.5" height="4" viewBox="0 0 13 8"><path d="M0.8 4Q6.5 -2 12.2 4Q6.5 10 0.8 4Z" fill="none" stroke="#b8b8b8" stroke-width="1.2"/><circle cx="6.5" cy="4" r="1.9" fill="#b8b8b8"/></svg>
<svg class="a" style="left:26.6px;top:11.82px" width="5.6" height="5.6" viewBox="0 0 13 13"><path d="M5 0.5H8L12.6 11V12.5H0.4V11Z" fill="#f0cf2a"/><rect x="5.5" y="3.5" width="2" height="5" fill="#4a3f12"/><rect x="3" y="9.8" width="7" height="1.4" fill="#4a3f12"/></svg>
<div class="a" style="left:36.5px;top:10.92px;font-size:4px;line-height:9.42px;color:#fafafa;white-space:nowrap;-webkit-text-stroke:.16px #fafafa">Enter your zip code</div>
<div class="a" style="left:12.5px;top:19.44px;width:138px;height:9.42px;background:#535353"></div>
<div class="a" style="left:0;top:28.06px;width:151px;height:.8px;background:#434343"></div>
<svg class="a" style="left:3px;top:22.34px" width="6.5" height="4" viewBox="0 0 13 8"><path d="M0.8 4Q6.5 -2 12.2 4Q6.5 10 0.8 4Z" fill="none" stroke="#b8b8b8" stroke-width="1.2"/><circle cx="6.5" cy="4" r="1.9" fill="#b8b8b8"/></svg>
<svg class="a" style="left:26.6px;top:21.24px" width="5.6" height="5.6" viewBox="0 0 13 13"><path d="M5 0.5H8L12.6 11V12.5H0.4V11Z" fill="#f0cf2a"/><rect x="5.5" y="3.5" width="2" height="5" fill="#4a3f12"/><rect x="3" y="9.8" width="7" height="1.4" fill="#4a3f12"/></svg>
<div class="a" style="left:36.5px;top:20.34px;font-size:4px;line-height:9.42px;color:#fafafa;white-space:nowrap;-webkit-text-stroke:.16px #fafafa">Press me</div>
<div class="a" style="left:12.5px;top:28.86px;width:138px;height:9.42px;background:#535353"></div>
<div class="a" style="left:0;top:37.48px;width:151px;height:.8px;background:#434343"></div>
<svg class="a" style="left:3px;top:31.76px" width="6.5" height="4" viewBox="0 0 13 8"><path d="M0.8 4Q6.5 -2 12.2 4Q6.5 10 0.8 4Z" fill="none" stroke="#b8b8b8" stroke-width="1.2"/><circle cx="6.5" cy="4" r="1.9" fill="#b8b8b8"/></svg>
<svg class="a" style="left:26.6px;top:30.66px" width="5.6" height="5.6" viewBox="0 0 13 13"><path d="M5 0.5H8L12.6 11V12.5H0.4V11Z" fill="#f0cf2a"/><rect x="5.5" y="3.5" width="2" height="5" fill="#4a3f12"/><rect x="3" y="9.8" width="7" height="1.4" fill="#4a3f12"/></svg>
<div class="a" style="left:36.5px;top:29.76px;font-size:4px;line-height:9.42px;color:#fafafa;white-space:nowrap;-webkit-text-stroke:.16px #fafafa">Be sure you put your feet &nbsp;in the right place</div>
<div class="a" style="left:12.5px;top:38.28px;width:138px;height:9.42px;background:#535353"></div>
<div class="a" style="left:0;top:46.90px;width:151px;height:.8px;background:#434343"></div>
<svg class="a" style="left:3px;top:41.18px" width="6.5" height="4" viewBox="0 0 13 8"><path d="M0.8 4Q6.5 -2 12.2 4Q6.5 10 0.8 4Z" fill="none" stroke="#b8b8b8" stroke-width="1.2"/><circle cx="6.5" cy="4" r="1.9" fill="#b8b8b8"/></svg>
<svg class="a" style="left:19.8px;top:40.08px" width="5.6" height="5.6" viewBox="0 0 13 13"><path d="M5 0.5H8L12.6 11V12.5H0.4V11Z" fill="#f0cf2a"/><rect x="5.5" y="3.5" width="2" height="5" fill="#4a3f12"/><rect x="3" y="9.8" width="7" height="1.4" fill="#4a3f12"/></svg>
<div class="a" style="left:30.5px;top:39.18px;font-size:4px;line-height:9.42px;color:#fafafa;white-space:nowrap;-webkit-text-stroke:.16px #fafafa">email address</div>
<div class="a" style="left:12.5px;top:47.70px;width:138px;height:9.42px;background:#535353"></div>
<div class="a" style="left:0;top:56.32px;width:151px;height:.8px;background:#434343"></div>
<svg class="a" style="left:3px;top:50.60px" width="6.5" height="4" viewBox="0 0 13 8"><path d="M0.8 4Q6.5 -2 12.2 4Q6.5 10 0.8 4Z" fill="none" stroke="#b8b8b8" stroke-width="1.2"/><circle cx="6.5" cy="4" r="1.9" fill="#b8b8b8"/></svg>
<svg class="a" style="left:19.8px;top:49.50px" width="5.6" height="5.6" viewBox="0 0 13 13"><path d="M5 0.5H8L12.6 11V12.5H0.4V11Z" fill="#f0cf2a"/><rect x="5.5" y="3.5" width="2" height="5" fill="#4a3f12"/><rect x="3" y="9.8" width="7" height="1.4" fill="#4a3f12"/></svg>
<div class="a" style="left:30.5px;top:48.60px;font-size:4px;line-height:9.42px;color:#fafafa;white-space:nowrap;-webkit-text-stroke:.16px #fafafa">Message</div>
<div class="a" style="left:12.5px;top:57.12px;width:138px;height:9.42px;background:#535353"></div>
<div class="a" style="left:0;top:65.74px;width:151px;height:.8px;background:#434343"></div>
<svg class="a" style="left:3px;top:60.02px" width="6.5" height="4" viewBox="0 0 13 8"><path d="M0.8 4Q6.5 -2 12.2 4Q6.5 10 0.8 4Z" fill="none" stroke="#b8b8b8" stroke-width="1.2"/><circle cx="6.5" cy="4" r="1.9" fill="#b8b8b8"/></svg>
<svg class="a" style="left:19.8px;top:58.92px" width="5.6" height="5.6" viewBox="0 0 13 13"><path d="M5 0.5H8L12.6 11V12.5H0.4V11Z" fill="#f0cf2a"/><rect x="5.5" y="3.5" width="2" height="5" fill="#4a3f12"/><rect x="3" y="9.8" width="7" height="1.4" fill="#4a3f12"/></svg>
<div class="a" style="left:30.5px;top:58.02px;font-size:4px;line-height:9.42px;color:#fafafa;white-space:nowrap;-webkit-text-stroke:.16px #fafafa">Name</div>
<div class="a" style="left:12.5px;top:66.54px;width:138px;height:9.42px;background:#535353"></div>
<div class="a" style="left:0;top:75.16px;width:151px;height:.8px;background:#434343"></div>
<svg class="a" style="left:3px;top:69.44px" width="6.5" height="4" viewBox="0 0 13 8"><path d="M0.8 4Q6.5 -2 12.2 4Q6.5 10 0.8 4Z" fill="none" stroke="#b8b8b8" stroke-width="1.2"/><circle cx="6.5" cy="4" r="1.9" fill="#b8b8b8"/></svg>
<svg class="a" style="left:26.6px;top:68.34px" width="5.6" height="5.6" viewBox="0 0 13 13"><path d="M5 0.5H8L12.6 11V12.5H0.4V11Z" fill="#f0cf2a"/><rect x="5.5" y="3.5" width="2" height="5" fill="#4a3f12"/><rect x="3" y="9.8" width="7" height="1.4" fill="#4a3f12"/></svg>
<div class="a" style="left:36.5px;top:67.44px;font-size:4px;line-height:9.42px;color:#fafafa;white-space:nowrap;-webkit-text-stroke:.16px #fafafa">This is Photoshop's version &nbsp;of Lorem Ipsum. &nbsp;Proin gravida...</div>
<div class="a" style="left:12.5px;top:75.96px;width:138px;height:9.42px;background:#535353"></div>
<div class="a" style="left:0;top:84.58px;width:151px;height:.8px;background:#434343"></div>
<svg class="a" style="left:3px;top:78.86px" width="6.5" height="4" viewBox="0 0 13 8"><path d="M0.8 4Q6.5 -2 12.2 4Q6.5 10 0.8 4Z" fill="none" stroke="#b8b8b8" stroke-width="1.2"/><circle cx="6.5" cy="4" r="1.9" fill="#b8b8b8"/></svg>
<svg class="a" style="left:26.6px;top:77.76px" width="5.6" height="5.6" viewBox="0 0 13 13"><path d="M5 0.5H8L12.6 11V12.5H0.4V11Z" fill="#f0cf2a"/><rect x="5.5" y="3.5" width="2" height="5" fill="#4a3f12"/><rect x="3" y="9.8" width="7" height="1.4" fill="#4a3f12"/></svg>
<div class="a" style="left:36.5px;top:76.86px;font-size:4px;line-height:9.42px;color:#fafafa;white-space:nowrap;-webkit-text-stroke:.16px #fafafa">Photos</div>
<div class="a" style="left:12.5px;top:85.38px;width:138px;height:9.42px;background:#535353"></div>
<div class="a" style="left:0;top:94.00px;width:151px;height:.8px;background:#434343"></div>
<svg class="a" style="left:3px;top:88.28px" width="6.5" height="4" viewBox="0 0 13 8"><path d="M0.8 4Q6.5 -2 12.2 4Q6.5 10 0.8 4Z" fill="none" stroke="#b8b8b8" stroke-width="1.2"/><circle cx="6.5" cy="4" r="1.9" fill="#b8b8b8"/></svg>
<svg class="a" style="left:26.6px;top:87.18px" width="5.6" height="5.6" viewBox="0 0 13 13"><path d="M5 0.5H8L12.6 11V12.5H0.4V11Z" fill="#f0cf2a"/><rect x="5.5" y="3.5" width="2" height="5" fill="#4a3f12"/><rect x="3" y="9.8" width="7" height="1.4" fill="#4a3f12"/></svg>
<div class="a" style="left:36.5px;top:86.28px;font-size:4px;line-height:9.42px;color:#fafafa;white-space:nowrap;-webkit-text-stroke:.16px #fafafa">This is Photoshop's version &nbsp;of Lorem Ipsum. &nbsp;Proin gravida...</div>
<div class="a" style="left:12.5px;top:94.80px;width:138px;height:9.42px;background:#535353"></div>
<div class="a" style="left:0;top:103.42px;width:151px;height:.8px;background:#434343"></div>
<svg class="a" style="left:3px;top:97.70px" width="6.5" height="4" viewBox="0 0 13 8"><path d="M0.8 4Q6.5 -2 12.2 4Q6.5 10 0.8 4Z" fill="none" stroke="#b8b8b8" stroke-width="1.2"/><circle cx="6.5" cy="4" r="1.9" fill="#b8b8b8"/></svg>
<svg class="a" style="left:26.6px;top:96.60px" width="5.6" height="5.6" viewBox="0 0 13 13"><path d="M5 0.5H8L12.6 11V12.5H0.4V11Z" fill="#f0cf2a"/><rect x="5.5" y="3.5" width="2" height="5" fill="#4a3f12"/><rect x="3" y="9.8" width="7" height="1.4" fill="#4a3f12"/></svg>
<div class="a" style="left:36.5px;top:95.70px;font-size:4px;line-height:9.42px;color:#fafafa;white-space:nowrap;-webkit-text-stroke:.16px #fafafa">Documents</div>
<div class="a" style="left:12.5px;top:104.22px;width:138px;height:9.42px;background:#5a6a80"></div>
<div class="a" style="left:0;top:112.84px;width:151px;height:.8px;background:#414b59"></div>
<svg class="a" style="left:3px;top:107.12px" width="6.5" height="4" viewBox="0 0 13 8"><path d="M0.8 4Q6.5 -2 12.2 4Q6.5 10 0.8 4Z" fill="none" stroke="#b8b8b8" stroke-width="1.2"/><circle cx="6.5" cy="4" r="1.9" fill="#b8b8b8"/></svg>
<svg class="a" style="left:19.8px;top:106.02px" width="5.6" height="5.6" viewBox="0 0 13 13"><path d="M5 0.5H8L12.6 11V12.5H0.4V11Z" fill="#f0cf2a"/><rect x="5.5" y="3.5" width="2" height="5" fill="#4a3f12"/><rect x="3" y="9.8" width="7" height="1.4" fill="#4a3f12"/></svg>
<div class="a" style="left:30.5px;top:105.12px;font-size:4px;line-height:9.42px;color:#fafafa;white-space:nowrap;-webkit-text-stroke:.16px #fafafa">Morbi accumsan ipsum velit. Nam nec tellus a odio tincidunt auc</div>
<div class="a" style="left:12.5px;top:113.64px;width:138px;height:9.42px;background:#5a6a80"></div>
<div class="a" style="left:0;top:122.26px;width:151px;height:.8px;background:#414b59"></div>
<svg class="a" style="left:3px;top:116.54px" width="6.5" height="4" viewBox="0 0 13 8"><path d="M0.8 4Q6.5 -2 12.2 4Q6.5 10 0.8 4Z" fill="none" stroke="#b8b8b8" stroke-width="1.2"/><circle cx="6.5" cy="4" r="1.9" fill="#b8b8b8"/></svg>
<svg class="a" style="left:19.8px;top:115.44px" width="5.6" height="5.6" viewBox="0 0 13 13"><path d="M5 0.5H8L12.6 11V12.5H0.4V11Z" fill="#f0cf2a"/><rect x="5.5" y="3.5" width="2" height="5" fill="#4a3f12"/><rect x="3" y="9.8" width="7" height="1.4" fill="#4a3f12"/></svg>
<div class="a" style="left:30.5px;top:114.54px;font-size:4px;line-height:9.42px;color:#fafafa;white-space:nowrap;-webkit-text-stroke:.16px #fafafa">Download</div>
<div class="a" style="left:12.5px;top:123.06px;width:138px;height:9.42px;background:#5a6a80"></div>
<div class="a" style="left:0;top:131.68px;width:151px;height:.8px;background:#414b59"></div>
<svg class="a" style="left:3px;top:125.96px" width="6.5" height="4" viewBox="0 0 13 8"><path d="M0.8 4Q6.5 -2 12.2 4Q6.5 10 0.8 4Z" fill="none" stroke="#b8b8b8" stroke-width="1.2"/><circle cx="6.5" cy="4" r="1.9" fill="#b8b8b8"/></svg>
<svg class="a" style="left:19.8px;top:124.86px" width="5.6" height="5.6" viewBox="0 0 13 13"><path d="M5 0.5H8L12.6 11V12.5H0.4V11Z" fill="#f0cf2a"/><rect x="5.5" y="3.5" width="2" height="5" fill="#4a3f12"/><rect x="3" y="9.8" width="7" height="1.4" fill="#4a3f12"/></svg>
<div class="a" style="left:30.5px;top:123.96px;font-size:4px;line-height:9.42px;color:#fafafa;white-space:nowrap;-webkit-text-stroke:.16px #fafafa">This is a Heading copy</div>
<div class="a" style="left:12.5px;top:132.48px;width:138px;height:9.42px;background:#5a6a80"></div>
<div class="a" style="left:0;top:141.10px;width:151px;height:.8px;background:#414b59"></div>
<svg class="a" style="left:3px;top:135.38px" width="6.5" height="4" viewBox="0 0 13 8"><path d="M0.8 4Q6.5 -2 12.2 4Q6.5 10 0.8 4Z" fill="none" stroke="#b8b8b8" stroke-width="1.2"/><circle cx="6.5" cy="4" r="1.9" fill="#b8b8b8"/></svg>
<svg class="a" style="left:19.8px;top:134.28px" width="5.6" height="5.6" viewBox="0 0 13 13"><path d="M5 0.5H8L12.6 11V12.5H0.4V11Z" fill="#f0cf2a"/><rect x="5.5" y="3.5" width="2" height="5" fill="#4a3f12"/><rect x="3" y="9.8" width="7" height="1.4" fill="#4a3f12"/></svg>
<div class="a" style="left:30.5px;top:133.38px;font-size:4px;line-height:9.42px;color:#fafafa;white-space:nowrap;-webkit-text-stroke:.16px #fafafa">This is Photoshop's version &nbsp;of Lorem Ipsum. Proin gravida nibh</div>
<div class="a" style="left:12.5px;top:141.90px;width:138px;height:9.42px;background:#5a6a80"></div>
<div class="a" style="left:0;top:150.52px;width:151px;height:.8px;background:#414b59"></div>
<svg class="a" style="left:3px;top:144.80px" width="6.5" height="4" viewBox="0 0 13 8"><path d="M0.8 4Q6.5 -2 12.2 4Q6.5 10 0.8 4Z" fill="none" stroke="#b8b8b8" stroke-width="1.2"/><circle cx="6.5" cy="4" r="1.9" fill="#b8b8b8"/></svg>
<svg class="a" style="left:19.8px;top:143.70px" width="5.6" height="5.6" viewBox="0 0 13 13"><path d="M5 0.5H8L12.6 11V12.5H0.4V11Z" fill="#f0cf2a"/><rect x="5.5" y="3.5" width="2" height="5" fill="#4a3f12"/><rect x="3" y="9.8" width="7" height="1.4" fill="#4a3f12"/></svg>
<div class="a" style="left:30.5px;top:142.80px;font-size:4px;line-height:9.42px;color:#fafafa;white-space:nowrap;-webkit-text-stroke:.16px #fafafa">This is a Heading</div>
<div class="a" style="left:12.5px;top:151.32px;width:138px;height:9.42px;background:#535353"></div>
<div class="a" style="left:0;top:159.94px;width:151px;height:.8px;background:#434343"></div>
<svg class="a" style="left:3px;top:154.22px" width="6.5" height="4" viewBox="0 0 13 8"><path d="M0.8 4Q6.5 -2 12.2 4Q6.5 10 0.8 4Z" fill="none" stroke="#b8b8b8" stroke-width="1.2"/><circle cx="6.5" cy="4" r="1.9" fill="#b8b8b8"/></svg>
<svg class="a" style="left:19.8px;top:153.12px" width="5.6" height="5.6" viewBox="0 0 13 13"><path d="M5 0.5H8L12.6 11V12.5H0.4V11Z" fill="#f0cf2a"/><rect x="5.5" y="3.5" width="2" height="5" fill="#4a3f12"/><rect x="3" y="9.8" width="7" height="1.4" fill="#4a3f12"/></svg>
<div class="a" style="left:30.5px;top:152.22px;font-size:4px;line-height:9.42px;color:#fafafa;white-space:nowrap;-webkit-text-stroke:.16px #fafafa">&nbsp;&copy; Copyright 2013 Cox Author, All Rights Reserved.</div>
<div class="a" style="left:12.2px;top:0;width:.6px;height:161px;background:#474747"></div>
</div>
<div class="a" style="left:592.5px;top:173px;width:4.5px;height:234.5px;background:#4a4a4a"></div>
<div class="a" style="left:442px;top:334px;width:150.5px;height:73.5px;background:#4b4b4b"></div>
<div class="a" style="left:442px;top:407.5px;width:155px;height:8.5px;background:#515151;border-top:.5px solid #3e3e3e"></div>
<svg class="a" style="left:515.5px;top:409px" width="6" height="6" viewBox="0 0 12 12"><path d="M1 6A2.5 2.5 0 0 1 6 6A2.5 2.5 0 0 1 1 6M6 6A2.5 2.5 0 0 0 11 6A2.5 2.5 0 0 0 6 6" fill="none" stroke="#a8a8a8" stroke-width="1.2"/></svg>
<svg class="a" style="left:526.5px;top:409px" width="6" height="6" viewBox="0 0 12 12"><path d="M5 2Q3.5 2 3.5 4V10M2 6H5.5M6 6L10 10M10 6L6 10" fill="none" stroke="#a8a8a8" stroke-width="1"/></svg>
<svg class="a" style="left:537.5px;top:409px" width="6" height="6" viewBox="0 0 12 12"><rect x="1.5" y="2.5" width="9" height="8" fill="#a8a8a8"/><circle cx="6" cy="6.5" r="2.5" fill="#555"/></svg>
<svg class="a" style="left:548.5px;top:409px" width="6" height="6" viewBox="0 0 12 12"><circle cx="5.5" cy="6" r="4" fill="none" stroke="#a8a8a8" stroke-width="1.3"/><path d="M5.5 2A4 4 0 0 1 5.5 10Z" fill="#a8a8a8"/><path d="M9 10.5H11.5" stroke="#a8a8a8" stroke-width="1"/></svg>
<svg class="a" style="left:559.5px;top:409px" width="6" height="6" viewBox="0 0 12 12"><path d="M1 3H5L6 4H11V10H1Z" fill="#a8a8a8"/></svg>
<svg class="a" style="left:570.5px;top:409px" width="6" height="6" viewBox="0 0 12 12"><rect x="1.5" y="2" width="9" height="8.5" fill="#a8a8a8"/><path d="M8 2V5H10.5" fill="none" stroke="#555" stroke-width="1"/></svg>
<svg class="a" style="left:581.5px;top:409px" width="6" height="6" viewBox="0 0 12 12"><path d="M2 3.5H10M4.5 3.5V2H7.5V3.5M3 4.5H9L8.5 10.5H3.5Z" fill="#a8a8a8" stroke="#a8a8a8" stroke-width=".8"/></svg>
<div class="a" style="left:597px;top:8px;width:3px;height:408px;background:#2b2b2b"></div>
<div class="a" style="left:550px;top:21.8px;width:45.5px;height:6.6px;background:#5b5b5b;border:.6px solid #3a3a3a;border-radius:1px;font-size:4.2px;line-height:6px;color:#e6e6e6;padding-left:2.6px;padding-top:.3px">Typography</div>
<div class="a" style="left:590.5px;top:22.6px;font-size:3px;line-height:2.2px;color:#ddd">&#9652;<br>&#9662;</div>
<!--/RIGHT-->
</body></html>
